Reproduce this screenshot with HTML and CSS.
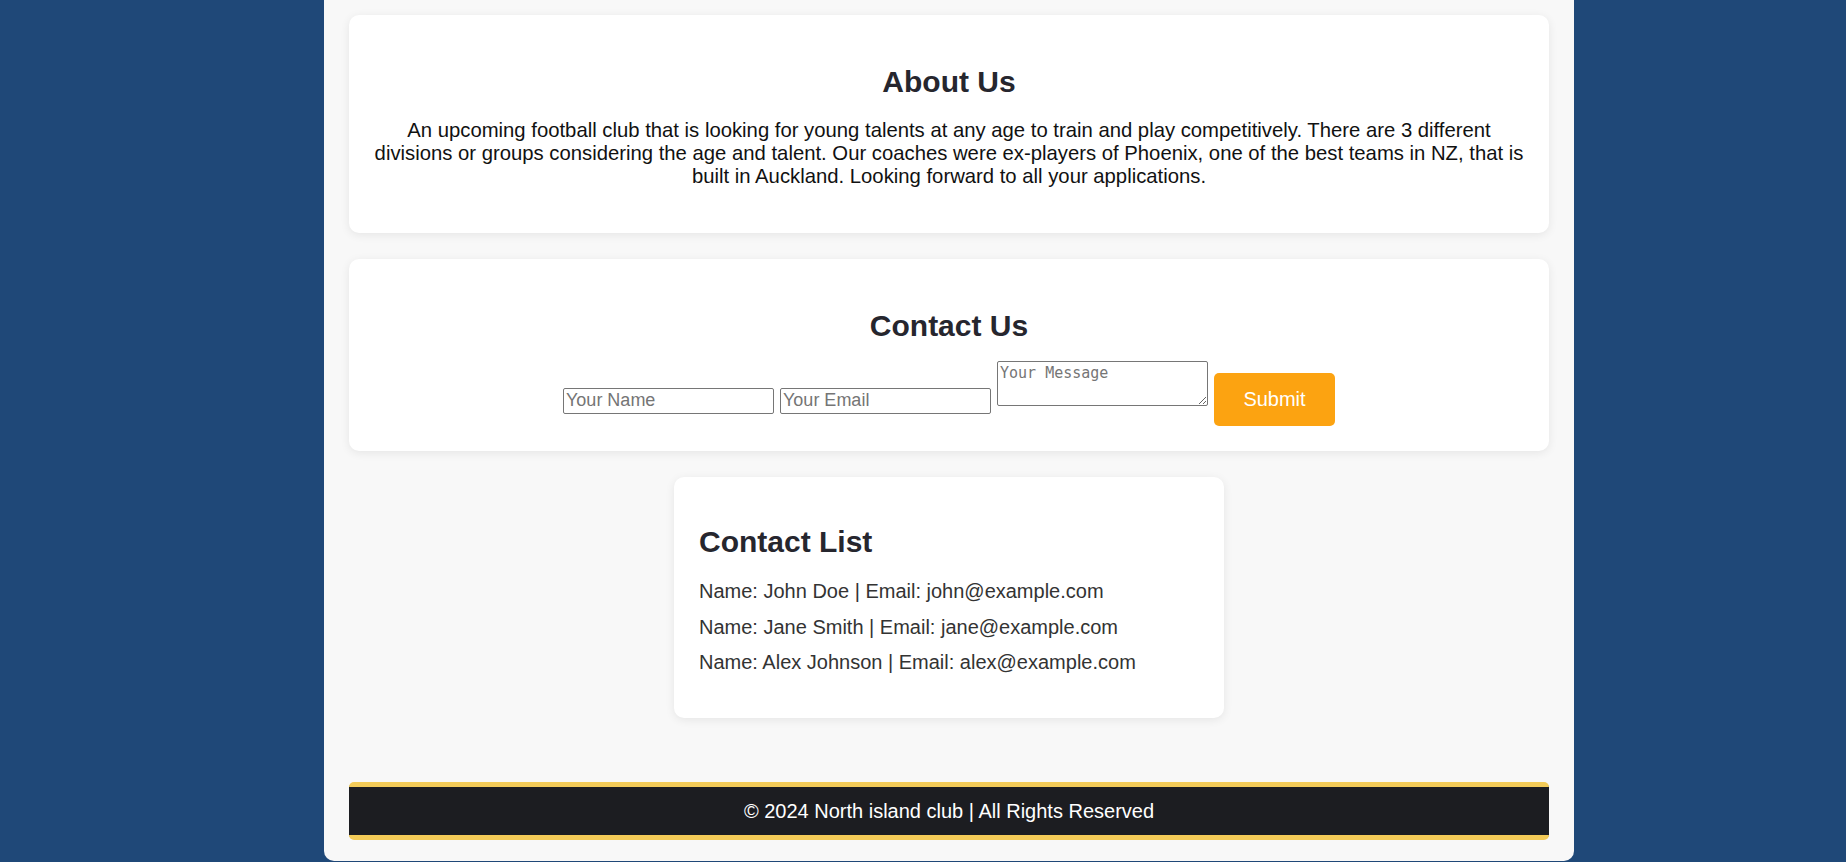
FILE: index.html
```html
<!DOCTYPE html>
<html lang="en">
<head>
<meta charset="utf-8">
<title>North island club</title>
<link rel="stylesheet" href="styles.css">
</head>
<body>
<div class="page">
  <section class="card about">
    <h2 class="card-title">About Us</h2>
    <p class="about-text">An upcoming football club that is looking for young talents at any age to train and play competitively. There are 3 different divisions or groups considering the age and talent. Our coaches were ex-players of Phoenix, one of the best teams in NZ, that is built in Auckland. Looking forward to all your applications.</p>
  </section>

  <section class="card contact">
    <h2 class="card-title">Contact Us</h2>
    <form class="contact-form"><input class="field" type="text" placeholder="Your Name"><input class="field" type="email" placeholder="Your Email"><textarea class="message" placeholder="Your Message"></textarea><button class="submit" type="button">Submit</button></form>
  </section>

  <section class="card list-card">
    <h2 class="card-title list-title">Contact List</h2>
    <ul class="contact-list">
      <li>Name: John Doe | Email: john@example.com</li>
      <li>Name: Jane Smith | Email: jane@example.com</li>
      <li>Name: Alex Johnson | Email: alex@example.com</li>
    </ul>
  </section>

  <footer class="footer">© 2024 North island club | All Rights Reserved</footer>
</div>
</body>
</html>
```

FILE: styles.css
```css
html, body {
  margin: 0;
  padding: 0;
}

body {
  background: #1f4878;
  font-family: "Liberation Sans", Arial, sans-serif;
  height: 862px;
  overflow: hidden;
}

.page {
  width: 1200px;
  margin-left: 324px;
  padding: 15px 25px 21px;
  background: #f8f8f8;
  border-radius: 0 0 10px 10px;
}

.card {
  background: #ffffff;
  border-radius: 10px;
  box-shadow: 0 2px 10px rgba(0, 0, 0, 0.08);
  padding: 25px;
  margin-bottom: 26px;
}

.card-title {
  font-size: 30px;
  font-weight: bold;
  color: #26262e;
  margin: 25px 0 18px;
  line-height: 34px;
}

.about {
  text-align: center;
}

.about-text {
  font-size: 20.3px;
  line-height: 23px;
  color: #111111;
  margin: 20px 0 20px;
}

.contact {
  text-align: center;
}

.contact-form {
  font-size: 0;
  margin: 0;
}

.field,
.message,
.submit {
  vertical-align: baseline;
  margin: 0 3px;
}

.field {
  box-sizing: border-box;
  width: 211px;
  height: 26px;
  font-family: "Liberation Sans", Arial, sans-serif;
  font-size: 18px;
  padding: 1px 2px;
  border: 1px solid #767676;
  border-radius: 2px;
  background: #fff;
}

.field::placeholder {
  color: #757575;
}

.message {
  box-sizing: border-box;
  width: 211px;
  height: 45px;
  font-family: "DejaVu Sans Mono", "Liberation Mono", monospace;
  font-size: 15px;
  padding: 2px;
  border: 1px solid #767676;
  border-radius: 2px;
  resize: both;
}

.message::placeholder {
  color: #757575;
}

.submit {
  box-sizing: border-box;
  width: 121px;
  height: 53px;
  background: #fca311;
  color: #ffffff;
  border: none;
  border-radius: 5px;
  font-family: "Liberation Sans", Arial, sans-serif;
  font-size: 20px;
  padding: 15px 20px;
  cursor: pointer;
}

.list-card {
  width: 500px;
  margin: 0 auto;
}

.list-title {
  margin: 23px 0 21px;
}

.contact-list {
  list-style: none;
  margin: 0 0 19px;
  padding: 0;
}

.contact-list li {
  font-size: 20px;
  line-height: 23px;
  color: #333333;
  margin-bottom: 12.5px;
}

.contact-list li:last-child {
  margin-bottom: 0;
}

.footer {
  margin-top: 64px;
  background: #1c1d21;
  color: #ffffff;
  text-align: center;
  font-size: 20px;
  line-height: 24px;
  padding: 12px 0;
  border-top: 5px solid #f3cb58;
  border-bottom: 5px solid #f3cb58;
  border-radius: 5px;
}
```
